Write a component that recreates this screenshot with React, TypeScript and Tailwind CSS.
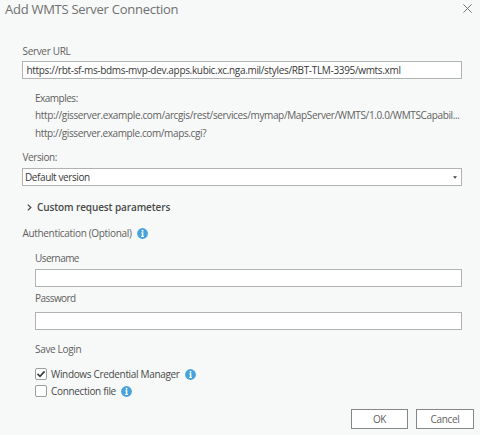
import type { ReactNode } from "react";

function InfoIcon() {
  return (
    <svg className="size-[11px] shrink-0" viewBox="0 0 11 11">
      <circle cx="5.5" cy="5.5" r="5.4" fill="#46a3dc" />
      <circle cx="5.6" cy="2.7" r="0.95" fill="#fff" />
      <path d="M4.3 4.3h2.1v3.7h.6v.9H4.1V8h.7V5.2h-.5z" fill="#fff" />
    </svg>
  );
}

function Label({ children, className = "" }: { children: ReactNode; className?: string }) {
  return <div className={`h-[14px] whitespace-nowrap leading-[14px] ${className}`}>{children}</div>;
}

function Checkbox({ checked = false }: { checked?: boolean }) {
  return (
    <span className="flex size-3 shrink-0 items-center justify-center rounded-[2px] border border-[#9b9c9c] bg-white">
      {checked && (
        <svg className="size-[10px] shrink-0" viewBox="0 0 10 10" fill="none">
          <path d="M1.5 4.9 4 7.3 8.6 2.4" stroke="#3c3c3c" strokeWidth="1.6" />
        </svg>
      )}
    </span>
  );
}

export default function App() {
  return (
    <div className="h-[435px] w-[480px] overflow-hidden bg-[#f7f9f8] font-['Open_Sans','Noto_Sans',sans-serif] text-[10px] tracking-[-0.33px] text-[#5f6060]">
      <header className="flex h-[44px] items-start justify-between pl-[5px] pr-[8px]">
        <h1 className="text-[13px] leading-[18px] tracking-[-0.27px] text-[#6f7070]">Add WMTS Server Connection</h1>
        <svg className="mt-[4px] size-[9px]" viewBox="0 0 9 9" fill="none" stroke="#777" strokeWidth="1">
          <path d="M.4.4 8.6 8.6M8.6.4.4 8.6" />
        </svg>
      </header>

      <main className="h-[365px] pl-[22px] pr-[18px]">
        <Label className="pl-[0.5px]">Server URL</Label>
        <div className="mt-[3px] flex h-[18px] w-[440px] items-center whitespace-nowrap border border-[#b1b3b3] bg-white pl-[3.5px] leading-[14px] text-[#383838]">
          https://rbt-sf-ms-bdms-mvp-dev.apps.kubic.xc.nga.mil/styles/RBT-TLM-3395/wmts.xml
        </div>
        <div className="mt-3 pl-[13px]">
          <Label className="tracking-[-0.5px]">Examples:</Label>
          <Label className="mt-[3px] tracking-[-0.36px]">
            http://gisserver.example.com/arcgis/rest/services/mymap/MapServer/WMTS/1.0.0/WMTSCapabil...
          </Label>
          <Label className="mt-1 tracking-[-0.38px]">http://gisserver.example.com/maps.cgi?</Label>
        </div>

        <Label className="mt-[10px] pl-[0.5px] tracking-[-0.4px]">Version:</Label>
        <div className="mt-1 flex h-[18px] w-[440px] items-center justify-between border border-[#b1b3b3] bg-white pl-[2px] pr-[4px] leading-[14px] text-[#383838]">
          <span className="tracking-[-0.4px]">Default version</span>
          <svg className="h-[3px] w-[4px]" viewBox="0 0 4 3">
            <path d="M0 .2h4L2 2.8z" fill="#444" />
          </svg>
        </div>

        <div className="mt-[14px] flex h-[14px] items-center pl-[5px] font-semibold leading-[14px] tracking-[-0.11px] text-[#484949]">
          <svg className="mr-[5px] h-[7px] w-[5px]" viewBox="0 0 5 7" fill="none">
            <path d="M.8.6 3.8 3.5.8 6.4" stroke="#4c4d4d" strokeWidth="1.3" />
          </svg>
          <span>Custom request parameters</span>
        </div>

        <div className="mt-3 flex h-[14px] items-center gap-[5px] pl-[0.5px] leading-[14px]">
          <span>Authentication (Optional)</span>
          <InfoIcon />
        </div>

        <div className="mt-[11px] pl-[13px]">
          <Label className="tracking-[-0.55px]">Username</Label>
          <div className="mt-1 h-[18px] w-[427px] border border-[#b1b3b3] bg-white" />
          <Label className="mt-1 tracking-[-0.55px]">Password</Label>
          <div className="mt-[7px] h-[18px] w-[427px] border border-[#b1b3b3] bg-white" />
          <Label className="mt-3">Save Login</Label>
          <div className="mt-[11px] flex h-[14px] items-center leading-[14px] text-[#484949]">
            <Checkbox checked />
            <span className="ml-1 mr-[5px]">Windows Credential Manager</span>
            <InfoIcon />
          </div>
          <div className="mt-[3px] flex h-[14px] items-center leading-[14px] text-[#484949]">
            <Checkbox />
            <span className="ml-1 mr-[5px]">Connection file</span>
            <InfoIcon />
          </div>
        </div>
      </main>

      <footer className="flex justify-end gap-2 pr-[6px]">
        <button className="h-5 w-[57px] border border-[#858686] bg-white leading-[14px]">OK</button>
        <button className="h-5 w-[58px] border border-[#858686] bg-white leading-[14px]">Cancel</button>
      </footer>
    </div>
  );
}
